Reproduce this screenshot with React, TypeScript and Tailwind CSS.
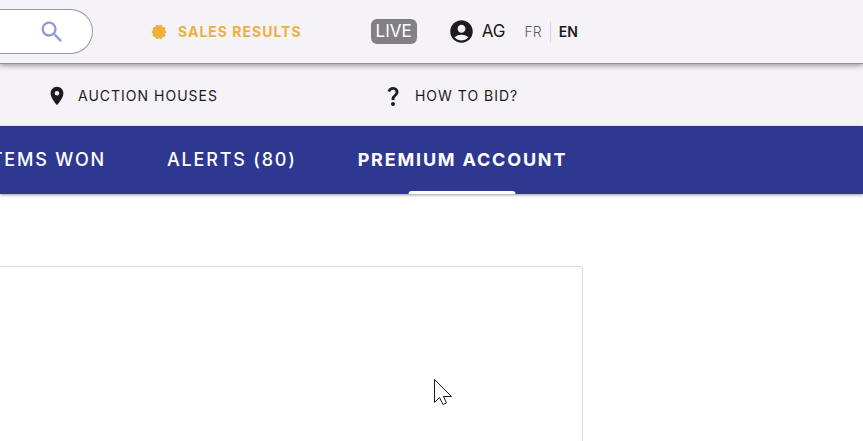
import { MdAccountCircle, MdLocationOn, MdQuestionMark, MdSearch } from "react-icons/md";

function BadgeIcon() {
    const lobes = Array.from({ length: 10 }, (_, index) => (index * Math.PI) / 5);

    return (
        <svg viewBox="0 0 24 24" className="size-4" fill="currentColor" aria-hidden="true">
            <circle cx="12" cy="12" r="9" />
            {lobes.map((angle) => (
                <circle
                    key={angle}
                    cx={12 + 8.4 * Math.cos(angle)}
                    cy={12 + 8.4 * Math.sin(angle)}
                    r="2.7"
                />
            ))}
        </svg>
    );
}

function TopBar() {
    return (
        <header className="relative z-10 flex h-16 items-center border-b border-[#949296] bg-[#f5f3f7] shadow-[0_2px_5px_rgba(0,0,0,0.35)]">
            <form
                role="search"
                className="flex h-[45px] w-[93px] items-center justify-end rounded-r-full border border-l-0 border-[#99979b] bg-white pr-[26px]"
            >
                <button type="button" aria-label="Search" className="text-[#9297d3]">
                    <MdSearch size={28} />
                </button>
            </form>

            <a
                href="#results"
                className="ml-[58px] flex items-center gap-[11px] text-sm font-bold tracking-[1px] text-[#ecb03c]"
            >
                <BadgeIcon />
                SALES RESULTS
            </a>

            <a href="#live" className="ml-[69px] rounded-md bg-[#828084] px-[5px] text-[17px] leading-[25px] text-white">
                LIVE
            </a>

            <button type="button" className="ml-[31px] flex items-center gap-[7px] text-[17px] text-[#1d1b20]">
                <MdAccountCircle size={27} />
                AG
            </button>

            <div className="ml-[19px] flex items-center text-sm">
                <button type="button" className="pr-2 font-light text-[#5f5d62]">FR</button>
                <button type="button" className="border-l border-[#d5d3d8] pl-2 font-semibold text-[#1d1b20]">
                    EN
                </button>
            </div>
        </header>
    );
}

function LinksBar() {
    return (
        <nav className="flex h-[62px] items-center bg-[#f5f3f7] pt-px pl-[46px] text-sm tracking-[1px] text-[#1d1b20]">
            <a href="#houses" className="flex items-center gap-[10px]">
                <MdLocationOn size={22} />
                AUCTION HOUSES
            </a>
            <a href="#bid" className="ml-[163px] flex items-center gap-[10px]">
                <MdQuestionMark size={24} />
                HOW TO BID?
            </a>
        </nav>
    );
}

function AccountTabs() {
    return (
        <nav className="flex h-[68px] bg-[#2f3891] text-lg font-medium tracking-widest text-white shadow-[0_1px_3px_rgba(0,0,0,0.4)]">
            {/* First tab is scrolled partly out of view */}
            <div className="flex w-[106px] items-center justify-end overflow-hidden whitespace-nowrap">
                <a href="#won">ITEMS WON</a>
            </div>
            <a href="#alerts" className="ml-[61px] flex items-center">
                ALERTS (80)
            </a>
            <a href="#premium" className="relative ml-[61px] flex items-center font-bold">
                PREMIUM ACCOUNT
                <span className="absolute bottom-0 left-1/2 h-[3px] w-[107px] -translate-x-1/2 rounded-t-sm bg-white" />
            </a>
        </nav>
    );
}

export default function App() {
    return (
        <div className="flex min-h-screen flex-col bg-white font-['Inter','Liberation_Sans',sans-serif]">
            <TopBar />
            <LinksBar />
            <AccountTabs />

            <main className="flex grow pt-[72px]">
                <section className="w-[583px] rounded-tr-sm border-t border-r border-[#dbdadc]" />
            </main>

            {/* Mouse pointer */}
            <svg
                viewBox="0 0 20 28"
                className="absolute top-[378px] left-[433px] h-7 w-5"
                fill="white"
                stroke="#1d1b20"
                aria-hidden="true"
            >
                <path d="M1.5 1.5V24.5L6.5 19.5L10 26.5L13.5 25L10.5 18.5H18.5Z" />
            </svg>
        </div>
    );
}
